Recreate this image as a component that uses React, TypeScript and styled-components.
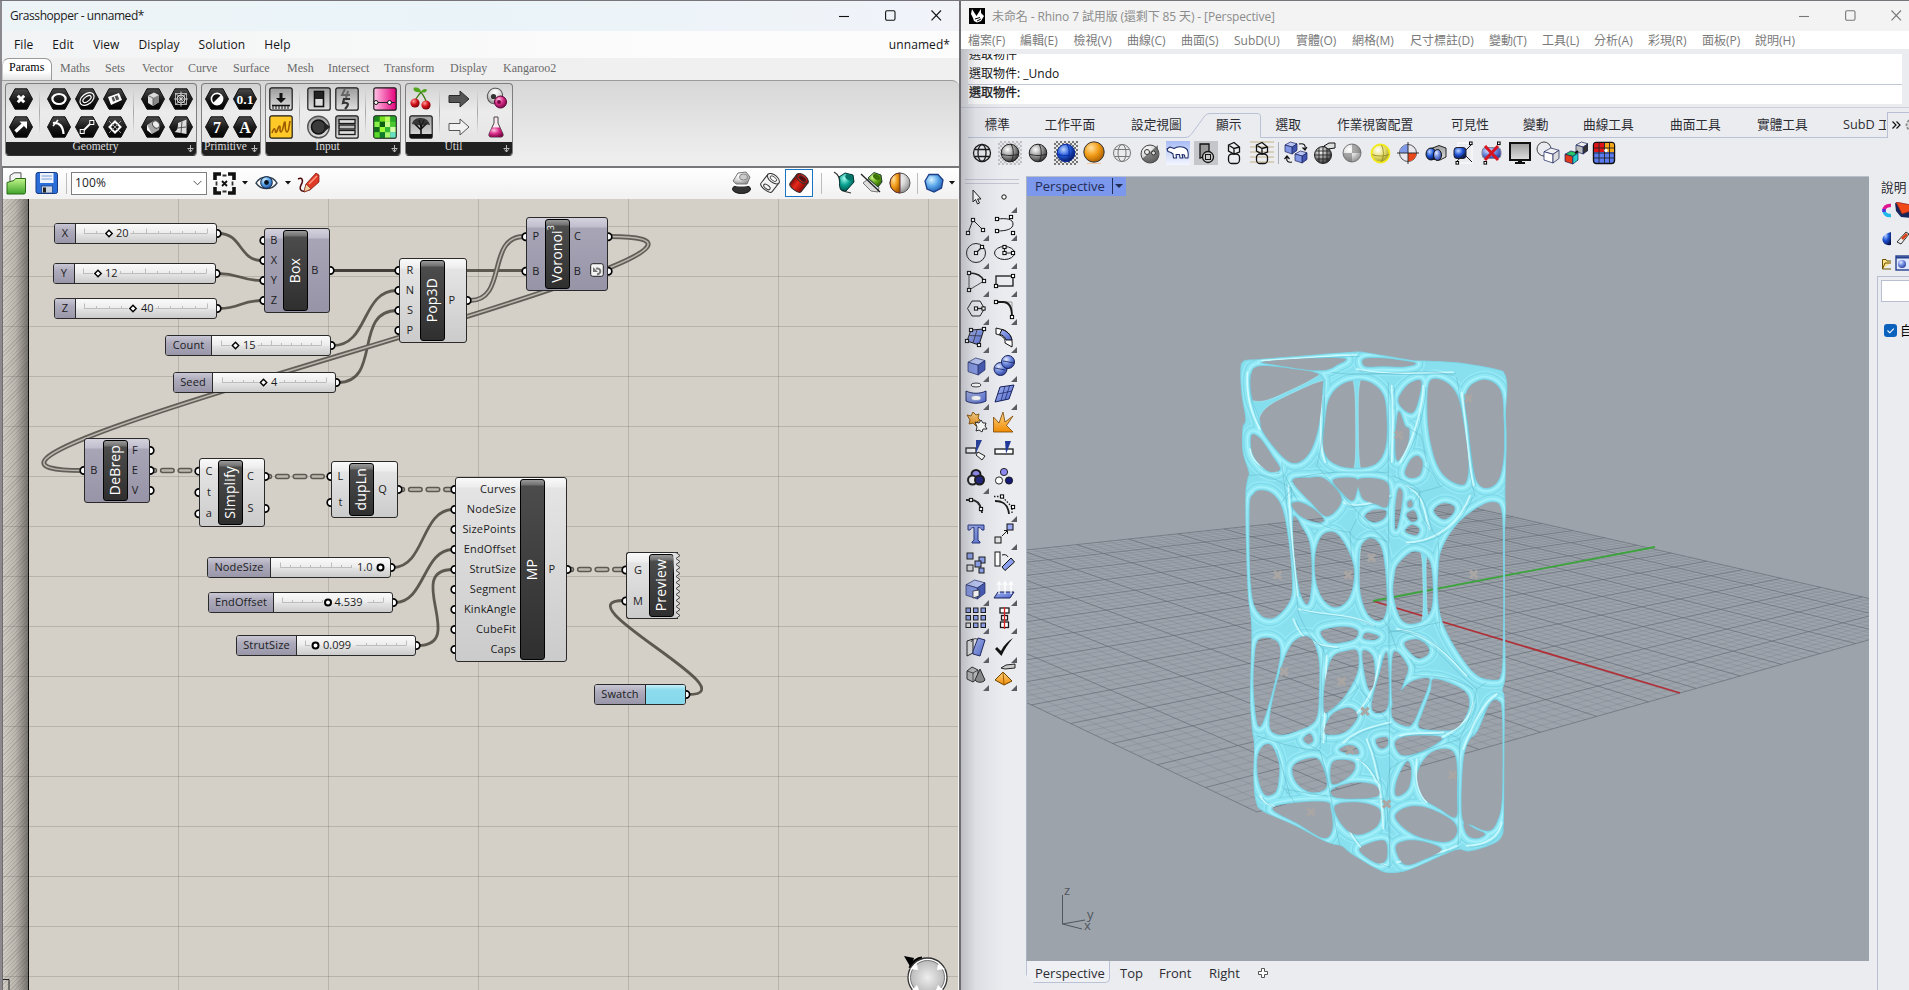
import React from "react";
import styled, { createGlobalStyle, css } from "styled-components";

const UI = '"Open Sans", "Noto Sans CJK TC", sans-serif';

const Global = createGlobalStyle`
  * { box-sizing: border-box; }
  html, body { margin: 0; padding: 0; overflow: hidden; }
  body { font-family: ${UI}; background: #ebecf0; }
  svg { display: block; flex: none; }
`;

const Desktop = styled.div`
  display: flex;
  width: 1909px;
  height: 990px;
  overflow: hidden;
  border-top: 1px solid #77757a;
`;

/* ---------- shared drawing definitions ---------- */

const HiddenSvg = styled.svg`
  position: absolute;
  width: 0;
  height: 0;
`;

const ball = (id: string, a: string, b: string, c: string) => (
  <radialGradient id={id} cx="0.36" cy="0.3" r="0.75">
    <stop offset="0" stopColor={a} />
    <stop offset="0.5" stopColor={b} />
    <stop offset="1" stopColor={c} />
  </radialGradient>
);

const Defs = () => (
  <HiddenSvg>
    <defs>
      {ball("gGray", "#ffffff", "#9a9a9a", "#2c2c2c")}
      {ball("gLight", "#ffffff", "#dcdcdc", "#8c8c8c")}
      {ball("gBlue", "#bcd6ff", "#1f55d8", "#04134f")}
      {ball("gSoft", "#e4eaff", "#6f8be0", "#2c3f98")}
      {ball("gOrange", "#ffe2a0", "#f29d18", "#a85c00")}
      {ball("gYellow", "#ffffff", "#e8e070", "#9c9420")}
      {ball("gRed", "#ff9a9a", "#d3121a", "#6c0006")}
      {ball("gPink", "#ffc4e2", "#d62b86", "#7a0544")}
      {ball("gSky", "#d8f2ff", "#5aa7ea", "#1c55a8")}
      {ball("gTeal", "#a4fff2", "#0aa392", "#004c44")}
      {ball("gGreen", "#dcff9c", "#6cb01c", "#2d5a00")}
      <linearGradient id="lHex" x1="0" y1="0" x2="0" y2="1">
        <stop offset="0" stopColor="#4a4a4a" />
        <stop offset="0.5" stopColor="#1b1b1b" />
        <stop offset="1" stopColor="#000" />
      </linearGradient>
      <linearGradient id="lGray" x1="0" y1="0" x2="0" y2="1">
        <stop offset="0" stopColor="#9c9c9c" />
        <stop offset="1" stopColor="#e0e0e0" />
      </linearGradient>
      <linearGradient id="lPink" x1="0" y1="0" x2="1" y2="0">
        <stop offset="0" stopColor="#ffc4e6" />
        <stop offset="1" stopColor="#e6007c" />
      </linearGradient>
      <linearGradient id="lRed" x1="0" y1="0" x2="1" y2="0">
        <stop offset="0" stopColor="#7c0a06" />
        <stop offset="0.4" stopColor="#e8281c" />
        <stop offset="1" stopColor="#8c0c08" />
      </linearGradient>
      <linearGradient id="lPale" x1="0" y1="0" x2="1" y2="1">
        <stop offset="0" stopColor="#a9b8f2" />
        <stop offset="1" stopColor="#4a63cc" />
      </linearGradient>
      <linearGradient id="lOrange" x1="0" y1="0" x2="0" y2="1">
        <stop offset="0" stopColor="#ffd489" />
        <stop offset="1" stopColor="#f08c00" />
      </linearGradient>
      <linearGradient id="lGreen" x1="0" y1="0" x2="0" y2="1">
        <stop offset="0" stopColor="#c2f58c" />
        <stop offset="1" stopColor="#3fa32a" />
      </linearGradient>
    </defs>
  </HiddenSvg>
);

/* ---------- window chrome ---------- */

const GhWindow = styled.section`
  width: 961px;
  height: 989px;
  display: flex;
  flex-direction: column;
  flex: none;
  background: #f0f0f0;
  border-left: 2px solid #8b898e;
  border-right: 2px solid #6f6d72;
`;

const TitleBar = styled.header<{ $muted?: boolean }>`
  height: 30px;
  flex: none;
  display: flex;
  align-items: center;
  font-size: 12px;
  letter-spacing: ${(p) => (p.$muted ? -0.12 : -0.42)}px;
  white-space: nowrap;
  color: ${(p) => (p.$muted ? "#8c8c8c" : "#1b1b1b")};
  background: ${(p) => (p.$muted ? "#f3f3f3" : "linear-gradient(90deg, #edf4f8, #eaf4f8 50%, #f1f3f9)")};
  padding: 0 0 1px 8px;
`;

const TitleText = styled.span`
  flex: 1;
`;

const Controls = styled.div<{ $right: number }>`
  display: flex;
  gap: 35px;
  margin-right: ${(p) => p.$right}px;
`;

const WindowControls = ({ color, right }: { color: string; right: number }) => (
  <Controls $right={right}>
    <svg width="11" height="11"><path d="M0 6.5H10" stroke={color} strokeWidth="1.1" /></svg>
    <svg width="11" height="11"><rect x="0.6" y="0.8" width="9.4" height="9.4" rx="1.4" fill="none" stroke={color} strokeWidth="1.1" /></svg>
    <svg width="11" height="11"><path d="M0.5 0.5L10 10.3M10 0.5L0.5 10.3" stroke={color} strokeWidth="1.1" /></svg>
  </Controls>
);

const GhMenu = styled.nav`
  height: 27px;
  flex: none;
  display: flex;
  align-items: center;
  gap: 19px;
  padding: 0 9px 0 12px;
  font-size: 12px;
  letter-spacing: 0.08px;
  color: #141414;
  background: linear-gradient(90deg, #f2f3f4, #fcfcfc 70%);
`;

const Push = styled.span`
  margin-left: auto;
`;

const TabRow = styled.div`
  height: 22px;
  flex: none;
  display: flex;
  background: #f0f0f0;
`;

const GhTab = styled.div<{ $w: number; $active?: boolean }>`
  width: ${(p) => p.$w}px;
  height: 22px;
  font: 12px/21px "Liberation Serif", serif;
  color: #6a6a6a;
  ${(p) =>
    p.$active &&
    css`
      color: #000;
      margin-right: 8px;
      padding: 0 0 0 6px;
      line-height: 16px;
      background: linear-gradient(#fff 60%, #e4e4e4);
      border: 1px solid #9a9a9a;
      border-left-color: #c8c8c8;
      border-bottom: 0;
      border-radius: 7px 7px 0 0;
    `}
`;

const Ribbon = styled.div`
  height: 86px;
  flex: none;
  display: flex;
  align-items: flex-start;
  gap: 4px;
  padding: 2px 0 0 2.5px;
  border-top: 1px solid #9c9c9c;
  border-radius: 0 7px 0 0;
  background: linear-gradient(#d7d7d7, #eeeeee 90%);
`;

const Group = styled.div`
  height: 73px;
  display: flex;
  flex-direction: column;
  border: 1px solid #7e7e7e;
  border-bottom-color: #333;
  border-radius: 4px;
  overflow: hidden;
  background: linear-gradient(#d2d2d2, #ececec 40%, #e2e2e2);
`;

const GroupCells = styled.div`
  display: flex;
  padding: 1px 1px 0;
  height: 58px;
`;

const CellColumn = styled.div<{ $split?: boolean }>`
  width: ${(p) => (p.$split ? 38 : 28)}px;
  padding-left: ${(p) => (p.$split ? 10 : 0)}px;
  display: flex;
  flex-direction: column;
  background: ${(p) => (p.$split ? "linear-gradient(transparent, #a8a8a8 50%, transparent) 4px 4px / 1px 46px no-repeat" : "none")};
`;

const Cell = styled.div`
  width: 28px;
  height: 28px;
  display: grid;
  place-items: center;
`;

const GroupName = styled.div`
  flex: 1;
  display: flex;
  justify-content: center;
  padding-right: 10px;
  position: relative;
  background: #202020;
  color: #dcdcdc;
  font: 11.5px/8px "Liberation Serif", serif;
`;

const GroupMore = styled.svg`
  position: absolute;
  right: 2px;
  top: 3px;
`;

const Hex = ({ children }: { children: React.ReactNode }) => (
  <svg width="24" height="22" viewBox="0 0 24 22">
    <path d="M6 0.8H18L23.5 11L18 21.2H6L0.5 11Z" fill="url(#lHex)" stroke="#111" />
    {children}
  </svg>
);

const Tile = ({ fill = "url(#lGray)", children }: { fill?: string; children: React.ReactNode }) => (
  <svg width="24" height="24" viewBox="0 0 24 24">
    <rect x="0.8" y="0.8" width="22.4" height="22.4" rx="2" fill={fill} stroke="#1a1a1a" strokeWidth="1.2" />
    {children}
  </svg>
);

const w = { fill: "none", stroke: "#fff", strokeWidth: 1.5 } as const;
const k = { fill: "none", stroke: "#1a1a1a", strokeWidth: 1.3 } as const;
const glyph = { fontFamily: "Liberation Serif, serif", fontWeight: 700, fill: "#fff", textAnchor: "middle" } as const;

type Column = { split?: boolean; icons: [React.ReactNode, React.ReactNode] };

const greens = ["#1b8a1b", "#7be01e", "#b9ff5e", "#2aa82a", "#8cf04a", "#0d5f12", "#c8ff8a", "#4cc832", "#136b1c", "#9dff3a", "#35b535", "#d6ffb0", "#5dd92a", "#0f7a2c", "#a8f570", "#68e0c8"];

const ribbonGroups: { name: string; columns: Column[] }[] = [
  {
    name: "Geometry",
    columns: [
      { icons: [
        <Hex><path d="M8.8 7.8L15.2 14.2M15.2 7.8L8.8 14.2" stroke="#fff" strokeWidth="3" /></Hex>,
        <Hex><path d="M6.5 15.5L14 8.5" stroke="#fff" strokeWidth="3.4" /><path d="M10.5 5.5H18V13Z" fill="#fff" /></Hex>,
      ] },
      { split: true, icons: [
        <Hex><ellipse cx="12" cy="11" rx="6.6" ry="5" {...w} strokeWidth={2.2} /></Hex>,
        <Hex><path d="M6 7C12 6 16 10 16.5 18" {...w} strokeWidth={2.2} /><path d="M6 10L11 4" {...w} /></Hex>,
      ] },
      { icons: [
        <Hex><g transform="rotate(-38 12 11)"><ellipse cx="12" cy="11" rx="8" ry="5.2" {...w} strokeWidth={1.2} /><ellipse cx="12" cy="11" rx="4.8" ry="2.4" {...w} strokeWidth={1.2} /></g></Hex>,
        <Hex><path d="M7 16L17 6" {...w} strokeWidth={1.8} /><rect x="5.2" y="13.5" width="4" height="4" fill="#222" stroke="#fff" /><rect x="14.8" y="4.5" width="4" height="4" fill="#222" stroke="#fff" /></Hex>,
      ] },
      { icons: [
        <Hex><path d="M5 9L16 5L19 12L8 17Z" fill="#fff" /><path d="M8.5 9.5L14.5 7.3L16.3 11.3L10 13.8Z" fill="#555" /><path d="M11 8L13 13" stroke="#fff" /></Hex>,
        <Hex><path d="M12 5.5L17.5 11L12 16.5L6.5 11Z" {...w} strokeWidth={2} /><path d="M6 5L18 17M18 5L6 17" stroke="#aaa" strokeWidth="0.9" /></Hex>,
      ] },
      { split: true, icons: [
        <Hex><path d="M7 7.5L13 4.5L18 7V14L12 18L7 15Z" fill="#ddd" /><path d="M12 10L18 7V14L12 18Z" fill="#888" /><path d="M7 7.5L12 10V18" stroke="#555" fill="none" strokeWidth="0.8" /></Hex>,
        <Hex><path d="M6 9L14 4L19 9L18 14L11 18L6 14Z" fill="#a8a8a8" /><path d="M6 9L11 18L6 14Z" fill="#fff" /><ellipse cx="15" cy="8.500" rx="3.200" ry="3.900" fill="#eee" stroke="#555" transform="rotate(-35 15 8.500)" /></Hex>,
      ] },
      { icons: [
        <Hex><path d="M12 3.5V18.5M5 11H19M7 5.5L17 16.5M17 5.5L7 16.5" stroke="#ddd" strokeWidth="0.9" /><circle cx="12" cy="11" r="4" stroke="#ddd" fill="none" /><rect x="6.5" y="5.5" width="11" height="11" fill="none" stroke="#ccc" strokeWidth="0.8" /></Hex>,
        <Hex><path d="M9 7L17.500 3.500V18L12 17L5.500 16C9 14 9 11 9 7Z" fill="#ddd" /><path d="M13 5.500L12 17M8.500 12L17 11" stroke="#444" strokeWidth="0.9" fill="none" /></Hex>,
      ] },
    ],
  },
  {
    name: "Primitive",
    columns: [
      { icons: [
        <Hex><circle cx="12" cy="11" r="5.6" fill="#111" stroke="#fff" strokeWidth="1.6" /><path d="M8 15A5.6 5.6 0 0 0 16 7Z" fill="#fff" /></Hex>,
        <Hex><text x="12" y="16.5" fontSize="16" {...glyph}>7</text></Hex>,
      ] },
      { icons: [
        <Hex><text x="12" y="15.8" fontSize="13.5" {...glyph}>0.1</text></Hex>,
        <Hex><text x="12" y="16.5" fontSize="16" {...glyph}>A</text></Hex>,
      ] },
    ],
  },
  {
    name: "Input",
    columns: [
      { icons: [
        <Tile><path d="M10.5 6H13.5V11H17L12 16L7 11H10.5Z" fill="#111" /><path d="M3 18.500H21" stroke="#111" strokeWidth="1.600" /><path d="M4 19V22M7 19V22M10 19V22M13 19V22M16 19V22M19 19V22" stroke="#111" /></Tile>,
        <Tile fill="#ffc928"><path d="M3 18C5 12 6 13 6.500 17C8 19 9 11 10.500 11C12 11 10 17 12 17C14 17 15 6 16 7C17 8 15 16 18 17C20 17 20 10 21 6" fill="none" stroke="#9c5c00" strokeWidth="1.6" /></Tile>,
      ] },
      { split: true, icons: [
        <Tile><rect x="7.500" y="4.500" width="9" height="15" fill="#ddd" stroke="#111" strokeWidth="1.6" /><rect x="8" y="5" width="8" height="7" fill="#222" /></Tile>,
        <svg width="24" height="24" viewBox="0 0 24 24"><circle cx="11.5" cy="12" r="10.8" fill="url(#lGray)" stroke="#555" strokeWidth="1.4" /><circle cx="11.500" cy="12" r="7" fill="#3a3a3a" stroke="#111" strokeWidth="1.600" /><path d="M17 7L23 12L17 17Z" fill="#222" /></svg>,
      ] },
      { icons: [
        <Tile><path d="M10 2L7 8H15M13 4L11 11" stroke="#666" strokeWidth="2" fill="none" /><path d="M15 12H9L8 16C13 15 15 17 10 22" stroke="#333" strokeWidth="2.2" fill="none" /></Tile>,
        <Tile><rect x="4" y="4.500" width="16" height="4" {...k} fill="#ddd" /><rect x="4" y="10" width="16" height="4" {...k} fill="#bbb" /><rect x="4" y="15.500" width="16" height="4" {...k} fill="#ddd" /></Tile>,
      ] },
      { split: true, icons: [
        <Tile fill="url(#lPink)"><path d="M2 15.500H22" stroke="#222" strokeWidth="1.2" /><circle cx="3" cy="15.500" r="2" fill="#fff" stroke="#111" /><circle cx="16.500" cy="15.500" r="2" fill="#fff" stroke="#111" /></Tile>,
        <Tile fill="#2aa82a">{greens.map((c, i) => <rect key={i} x={1.5 + (i % 4) * 5.25} y={1.5 + Math.floor(i / 4) * 5.25} width="5.3" height="5.3" fill={c} />)}</Tile>,
      ] },
    ],
  },
  {
    name: "Util",
    columns: [
      { icons: [
        <svg width="24" height="24" viewBox="0 0 24 24"><path d="M12 5C9 9 7 11 6 14M12 5C15 10 17 12 17 15" stroke="#3c7a10" strokeWidth="1.300" fill="none" /><path d="M12 5C4 6 4 2 5 0.500C9 0 12 2 12 5C13 2 17 1 18 3C17 6 14 6 12 5Z" fill="#4fa51c" /><circle cx="6" cy="16" r="4.600" fill="url(#gRed)" /><circle cx="17" cy="18" r="4.600" fill="url(#gRed)" /></svg>,
        <Tile><path d="M12 22V12M12 15L6 9M12 14L18 8M12 12L10 5M12 12L15 5" stroke="#111" strokeWidth="1.600" fill="none" /><path d="M3 9C4 4 8 3 12 3C17 3 20 6 21 10C17 8 16 12 12 9C9 12 6 9 3 9Z" fill="#222" opacity="0.85" /><path d="M1 19H23V23H1Z" fill="#111" /></Tile>,
      ] },
      { split: true, icons: [
        <svg width="22" height="20" viewBox="0 0 22 20"><path d="M1 6.500H12V2L21 10L12 18V13.500H1Z" fill="#555" stroke="#2a2a2a" /></svg>,
        <svg width="22" height="20" viewBox="0 0 22 20"><path d="M1 6.500H12V2L21 10L12 18V13.500H1Z" fill="#f2f2f2" stroke="#555" /></svg>,
      ] },
      { split: true, icons: [
        <svg width="24" height="24" viewBox="0 0 24 24"><ellipse cx="10" cy="9" rx="7.5" ry="8" fill="url(#gLight)" stroke="#555" transform="rotate(35 10 9)" /><circle cx="8.500" cy="9.500" r="2.600" fill="#333" /><circle cx="15.500" cy="15" r="6" fill="url(#gPink)" stroke="#5a0030" /><circle cx="14" cy="15" r="2" fill="#7a0544" /></svg>,
        <svg width="22" height="24" viewBox="0 0 22 24"><path d="M8 2H12V8L17 19C17.500 21 16.500 22 15 22H5C3.500 22 2.500 21 3 19L8 8Z" fill="#fbe9f2" stroke="#444" /><path d="M6 12.500H14L17 19C17.500 21 16.500 22 15 22H5C3.500 22 2.500 21 3 19Z" fill="url(#gPink)" /></svg>,
      ] },
    ],
  },
];

const ghTabs: [string, number][] = [
  ["Maths", 45], ["Sets", 37], ["Vector", 46], ["Curve", 45], ["Surface", 54], ["Mesh", 41],
  ["Intersect", 56], ["Transform", 66], ["Display", 53], ["Kangaroo2", 60],
];

/* ---------- canvas toolbar ---------- */

const CanvasBar = styled.div`
  height: 33px;
  flex: none;
  display: flex;
  align-items: center;
  border-top: 2px solid #77777a;
  border-left: 1px solid #77777a;
  padding: 0 4px 1px 3px;
  background: linear-gradient(#ffffff, #f1f1f1);
`;

const Gap = styled.span<{ $w: number }>`
  width: ${(p) => p.$w}px;
  flex: none;
`;

const Divider = styled.span`
  width: 1px;
  height: 21px;
  background: #bdbdbd;
  flex: none;
`;

const Zoom = styled.div`
  width: 136px;
  height: 23px;
  border: 1px solid #7f7f7f;
  background: #fff;
  display: flex;
  align-items: center;
  justify-content: space-between;
  padding: 0 4px 1px 3px;
  font-size: 12px;
  letter-spacing: 0.1px;
  color: #222;
`;

const Selected = styled.span`
  width: 28px;
  height: 28px;
  display: grid;
  place-items: center;
  border: 1px solid #1a74c4;
  background: #fff;
`;

const Caret = () => <svg width="6" height="4"><path d="M0 0H6L3 3.500Z" fill="#111" /></svg>;

const Tube = ({ fill, open }: { fill: string; open?: boolean }) => (
  <svg width="24" height="24" viewBox="0 0 24 24">
    <g transform="rotate(38 12 12)" stroke="#333" strokeWidth="1">
      <path d="M5 6.500V17.500C5 21.500 19 21.500 19 17.500V6.500Z" fill={fill} />
      <ellipse cx="12" cy="6.500" rx="7" ry="3.800" fill={fill} />
      <ellipse cx="12" cy="6.500" rx="3.800" ry="1.900" fill={open ? "#fff" : "#5a0804"} strokeWidth="0.800" />
      {open && <ellipse cx="12" cy="17" rx="3.800" ry="1.900" fill="none" />}
    </g>
  </svg>
);

const GhToolbar = () => (
  <CanvasBar>
    <svg width="21" height="23" viewBox="0 0 21 23"><path d="M4 10V3.500L8 0.800H15V10" fill="#f4f4f4" stroke="#555" /><path d="M1 10.500L8 8.500L9.500 6.500H19.500V20.500L18.500 22H1Z" fill="url(#lGreen)" stroke="#2b6b18" /></svg>
    <Gap $w={8} />
    <svg width="24" height="24" viewBox="0 0 24 24"><rect x="1" y="1.500" width="21.500" height="21" rx="2" fill="#2a6cd8" stroke="#163a80" /><rect x="5" y="2" width="13.500" height="10" fill="#eef3fb" /><path d="M6.500 5H17M6.500 8H17" stroke="#7aa0d8" /><rect x="6.500" y="15" width="11" height="7" fill="#c9d2e0" stroke="#163a80" strokeWidth="0.700" /><rect x="8" y="16.500" width="3" height="5" fill="#222" /></svg>
    <Gap $w={7} /><Divider /><Gap $w={4} />
    <Zoom>100%<svg width="9" height="6"><path d="M0.500 0.800L4.500 4.800L8.500 0.800" fill="none" stroke="#555" /></svg></Zoom>
    <Gap $w={6} />
    <svg width="23" height="23" viewBox="0 0 23 23"><path d="M8 2H2V8M15 2H21V8M8 21H2V15M15 21H21V15" fill="none" stroke="#111" strokeWidth="3.600" /><path d="M9.500 3.500H13.500M9.500 19.500H13.500M3.500 9.500V13.500M19.500 9.500V13.500" stroke="#333" strokeWidth="1.800" /><path d="M9 9L14 14M14 9L9 14" stroke="#111" strokeWidth="1.800" /></svg>
    <Gap $w={6} /><Caret /><Gap $w={7} />
    <svg width="23" height="16" viewBox="0 0 23 16"><path d="M1 8C6 0 17 0 22 8C17 15.500 6 15.500 1 8Z" fill="#fff" stroke="#345" strokeWidth="1.400" /><circle cx="11.500" cy="7.500" r="5.800" fill="url(#gSky)" stroke="#124" /><circle cx="11.500" cy="7.500" r="2.400" fill="#06121f" /></svg>
    <Gap $w={7} /><Caret /><Gap $w={6} />
    <svg width="24" height="22" viewBox="0 0 24 22"><path d="M1 7C5 5 7 8 4 13C2 17 4 20 8 19" fill="none" stroke="#4a0a0a" strokeWidth="1.500" /><path d="M7 20L9 12L19 1L22 3V10L13 18Z" fill="#e03a26" stroke="#701008" strokeWidth="0.700" /><path d="M7 20L9 12L14 17Z" fill="#f2d2a0" stroke="#701008" strokeWidth="0.500" /><path d="M12 12L20 4" stroke="#ff9b80" strokeWidth="1.500" /></svg>
    <Push />
    <svg width="24" height="24" viewBox="0 0 24 24"><ellipse cx="12.500" cy="18" rx="9" ry="4.500" fill="#333" stroke="#111" /><path d="M4 14C8 10 17 10 21 14C17 16 8 16 4 14Z" fill="#fff" /><path d="M4 10L9 2L17 1L21 6L18 13L7 13Z" fill="url(#gLight)" stroke="#777" /><ellipse cx="14.500" cy="6" rx="4" ry="3" fill="#ccc" stroke="#888" /></svg>
    <Gap $w={5} /><Tube fill="#f4f4f4" open /><Gap $w={3} />
    <Selected><Tube fill="url(#lRed)" /></Selected>
    <Gap $w={8} /><Divider /><Gap $w={11} />
    <svg width="24" height="24" viewBox="0 0 24 24"><path d="M1 1C10 6 4 14 10 20L18 22" fill="none" stroke="#333" strokeWidth="1.200" /><path d="M6 6L12 2L20 4L21 11L13 20L8 19C5 14 8 11 6 6Z" fill="url(#gTeal)" stroke="#033" /><ellipse cx="16" cy="6.500" rx="4" ry="2.500" fill="#067468" transform="rotate(30 16 6.500)" /></svg>
    <Gap $w={3} />
    <svg width="24" height="24" viewBox="0 0 24 24"><path d="M3 12L11 20L18 21L19 16L8 8Z" fill="#ddd" stroke="#777" /><path d="M8 7L14 1.500L21 4L22 11L18 16Z" fill="url(#gGreen)" stroke="#243" /><ellipse cx="16.500" cy="6" rx="4" ry="2.500" fill="#3d7408" transform="rotate(35 16.500 6)" /><path d="M1 3L20 21" stroke="#222" strokeWidth="1.300" /></svg>
    <Gap $w={4} />
    <svg width="24" height="24" viewBox="0 0 24 24"><circle cx="12" cy="12" r="10" fill="url(#gLight)" stroke="#555" /><path d="M12 2A10 10 0 0 0 12 22Z" fill="url(#gOrange)" stroke="#633" /></svg>
    <Gap $w={5} /><Divider /><Gap $w={6} />
    <svg width="20" height="20" viewBox="0 0 20 20"><path d="M5 1.500H14L19 7L17.500 15L10 19L3 16L1 8Z" fill="url(#gSky)" stroke="#1b3d88" strokeWidth="1.300" /></svg>
    <Gap $w={5} /><Caret />
  </CanvasBar>
);

/* ---------- node canvas ---------- */

const CanvasArea = styled.div`
  position: relative;
  flex: 1;
  overflow: hidden;
  border-left: 1px solid #6f6d70;
  border-right: 1px solid #f4f4f4;
  background:
    repeating-linear-gradient(90deg, transparent 0 149px, rgba(70, 66, 58, 0.2) 149px 150px) 26px 0,
    repeating-linear-gradient(180deg, transparent 0 49px, rgba(70, 66, 58, 0.2) 49px 50px) 0 -22px / 100% 1000px,
    #d4d0c8;
`;

const CanvasEdge = styled.div`
  position: absolute;
  left: 0;
  top: 0;
  bottom: 0;
  width: 26px;
  border-right: 1px solid #111;
  background:
    linear-gradient(90deg, rgba(70, 66, 60, 0.02), rgba(70, 66, 60, 0.18) 50%, rgba(60, 58, 54, 0.62)),
    repeating-linear-gradient(135deg, rgba(120, 116, 108, 0.25) 0 1px, transparent 1px 3px);
`;

/* Canvas children use window coordinates; this layer shifts them back. */
const Layer = styled.div`
  position: absolute;
  left: -3px;
  top: -199px;
  width: 960px;
  height: 990px;
`;

const WireSvg = styled.svg`
  position: absolute;
  inset: 0;
`;

const violet = "linear-gradient(#d4d2dc 0, #c0bece 9px, #a7a5b6 10px, #9694a6 100%)";
const silver = "linear-gradient(#fafafa 0, #ededed 9px, #e4e4e4 10px, #cbcbcb 100%)";

const NodeBox = styled.div<{ $x: number; $y: number; $w: number; $h: number; $violet?: boolean; $open?: boolean }>`
  position: absolute;
  left: ${(p) => p.$x}px;
  top: ${(p) => p.$y}px;
  width: ${(p) => p.$w}px;
  height: ${(p) => p.$h}px;
  display: flex;
  border: 1px solid #2a2a2a;
  border-radius: 3px;
  background: ${(p) => (p.$violet ? violet : silver)};
  ${(p) => p.$open && css`border-right: 0; border-radius: 3px 0 0 3px;`}
`;

const PortColumn = styled.div<{ $w?: number }>`
  ${(p) => (p.$w ? `width: ${p.$w}px;` : "flex: 1;")}
  display: flex;
  flex-direction: column;
  padding: 1.5px 0;
`;

const PortName = styled.span<{ $pad?: number }>`
  flex: 1;
  display: flex;
  align-items: center;
  justify-content: ${(p) => (p.$pad !== undefined ? "flex-end" : "center")};
  padding: 0 ${(p) => p.$pad || 0}px 2px 0;
  font-size: 11px;
  letter-spacing: 0.15px;
  line-height: 1;
  color: #1c1c22;
`;

const NodeTitle = styled.div`
  width: 25px;
  margin: 1px 0;
  display: grid;
  place-items: center;
  border: 1px solid #000;
  border-radius: 3px;
  background: linear-gradient(#9a9a9a 0, #707070 5px, #4c4c4c 6px, #2f2f2f 100%);
  color: #fff;
  font-size: 14px;
  line-height: 23px;
  white-space: nowrap;
`;

const Vertical = styled.span`
  writing-mode: vertical-rl;
  transform: translateX(-1.5px) rotate(180deg);
  letter-spacing: 0.15px;
  sup { font-size: 9px; line-height: 0; }
`;

type NodeData = {
  id: string; x: number; y: number; w: number; h: number; violet?: boolean; open?: boolean;
  leftW: number; title: React.ReactNode; ins: string[]; outs: string[]; end?: boolean; undo?: boolean; rightW?: number;
};

const nodes: NodeData[] = [
  { id: "box", x: 264, y: 228, w: 66, h: 85, violet: true, leftW: 18, title: "Box", ins: ["B", "X", "Y", "Z"], outs: ["B"], rightW: 14 },
  { id: "pop", x: 399, y: 258, w: 68, h: 85, leftW: 20, title: "Pop3D", ins: ["R", "N", "S", "P"], outs: ["P"], rightW: 14 },
  { id: "vor", x: 526, y: 217, w: 82, h: 74, violet: true, leftW: 18, title: <>Voronoi<sup>3</sup></>, ins: ["P", "B"], outs: ["C", "B"], undo: true, rightW: 15 },
  { id: "brep", x: 84, y: 438, w: 66, h: 65, violet: true, leftW: 18, title: "DeBrep", ins: ["B"], outs: ["F", "E", "V"], rightW: 14 },
  { id: "simp", x: 199, y: 458, w: 66, h: 69, leftW: 18, title: "Simplify", ins: ["C", "t", "a"], outs: ["C", "S"], rightW: 15 },
  { id: "dup", x: 331, y: 461, w: 67, h: 57, leftW: 17, title: "dupLn", ins: ["L", "t"], outs: ["Q"], rightW: 17 },
  { id: "mp", x: 455, y: 477, w: 112, h: 185, leftW: 64, title: "MP", ins: ["Curves", "NodeSize", "SizePoints", "EndOffset", "StrutSize", "Segment", "KinkAngle", "CubeFit", "Caps"], outs: ["P"], end: true, rightW: 14 },
  { id: "prev", x: 626, y: 552, w: 52, h: 67, open: true, leftW: 22, title: "Preview", ins: ["G", "M"], outs: [] },
];

const UndoBadge = styled.span`
  position: absolute;
  right: 3px;
  bottom: 13px;
`;

const Teeth = styled.svg`
  position: absolute;
  right: -3px;
  top: -1px;
`;

const GraphNode = ({ n }: { n: NodeData }) => (
  <NodeBox $x={n.x} $y={n.y} $w={n.w} $h={n.h} $violet={n.violet} $open={n.open}>
    <PortColumn $w={n.leftW}>
      {n.ins.map((p) => <PortName key={p} $pad={n.end ? 4 : undefined}>{p}</PortName>)}
    </PortColumn>
    <NodeTitle><Vertical>{n.title}</Vertical></NodeTitle>
    <PortColumn $w={n.rightW}>
      {n.outs.map((p) => <PortName key={p}>{p}</PortName>)}
    </PortColumn>
    {n.undo && (
      <UndoBadge>
        <svg width="14" height="14"><rect x="0.700" y="0.700" width="12.600" height="12.600" rx="2" fill="#f4f4f4" stroke="#222" /><path d="M7 11.500C12 10 11 4.500 6 5.500" stroke="#777" strokeWidth="2" fill="none" /><path d="M3 4V9H8Z" fill="#777" /></svg>
      </UndoBadge>
    )}
    {n.open && (
      <Teeth width="8" height="67">
        <path d={"M0 0.500H3" + Array.from({ length: 11 }, (_, i) => `L7 ${3.5 + i * 6}L3 ${6.5 + i * 6}`).join("")} fill="#e2e2e2" stroke="#333" strokeWidth="0.900" />
      </Teeth>
    )}
  </NodeBox>
);

const SliderName = styled.div<{ $w: number }>`
  width: ${(p) => p.$w}px;
  display: flex;
  align-items: center;
  justify-content: center;
  padding-bottom: 2px;
  border-right: 1px solid #2a2a2a;
  border-radius: 2px 0 0 2px;
  background: linear-gradient(#c9c7d4 0, #adabbb 7px, #9896a8 100%);
  font-size: 11px;
  letter-spacing: 0.15px;
  line-height: 1;
  color: #1c1c22;
`;

const SliderBody = styled.div<{ $color?: string }>`
  flex: 1;
  position: relative;
  border-radius: 0 2px 2px 0;
  background: ${(p) => p.$color || "transparent"};
`;

const Ruler = styled.svg`
  position: absolute;
  left: 0;
  top: 0;
`;

const SliderValue = styled.span<{ $x: number }>`
  position: absolute;
  left: ${(p) => p.$x}px;
  top: 2px;
  font-size: 11px;
  line-height: 14px;
  color: #1c1c1c;
`;

type SliderData = { x: number; y: number; w: number; name: string; lw: number; t0: number; t1: number; knob: number; value: string; vx: number; round?: boolean };

const sliders: SliderData[] = [
  { x: 54, y: 223, w: 163, name: "X", lw: 21, t0: 84, t1: 207, knob: 109, value: "20", vx: 116 },
  { x: 53, y: 263, w: 163, name: "Y", lw: 21, t0: 83, t1: 206, knob: 98, value: "12", vx: 105 },
  { x: 54, y: 298, w: 163, name: "Z", lw: 21, t0: 84, t1: 207, knob: 133, value: "40", vx: 141 },
  { x: 165, y: 335, w: 166, name: "Count", lw: 46, t0: 221, t1: 321, knob: 235.5, value: "15", vx: 243 },
  { x: 173, y: 372, w: 163, name: "Seed", lw: 39, t0: 222, t1: 326, knob: 263.5, value: "4", vx: 271 },
  { x: 207, y: 557, w: 184, name: "NodeSize", lw: 63, t0: 280, t1: 381, knob: 380, value: "1.0", vx: 357, round: true },
  { x: 208, y: 592, w: 185, name: "EndOffset", lw: 65, t0: 282, t1: 383, knob: 327.5, value: "4.539", vx: 334.5, round: true },
  { x: 236, y: 635, w: 180, name: "StrutSize", lw: 60, t0: 305, t1: 406, knob: 315, value: "0.099", vx: 323, round: true },
];

const SliderNode = ({ s }: { s: SliderData }) => {
  const o = s.x + s.lw + 1;
  const lo = Math.min(s.knob, s.vx) - 5;
  const hi = Math.max(s.knob, s.vx + s.value.length * 6.2) + 2;
  const ticks = Array.from({ length: 11 }, (_, i) => s.t0 + ((s.t1 - s.t0) * i) / 10).filter((t) => t < lo || t > hi);
  return (
    <NodeBox $x={s.x} $y={s.y} $w={s.w} $h={21}>
      <SliderName $w={s.lw}>{s.name}</SliderName>
      <SliderBody>
        <Ruler width={s.w - s.lw - 2} height="19">
          <g stroke="#bdbdbd" strokeWidth="1">
            {lo > s.t0 && <path d={`M${s.t0 - o} 9.500H${lo - o}`} />}
            {hi < s.t1 && <path d={`M${hi - o} 9.500H${s.t1 - o}`} />}
            {ticks.map((t, i) => <path key={i} d={`M${Math.round(t - o) + 0.5} ${t === s.t0 || t === s.t1 || Math.abs(t - (s.t0 + s.t1) / 2) < 1 ? 4.5 : 7}V9.500`} />)}
          </g>
          {s.round ? (
            <circle cx={s.knob - o + 0.5} cy="9.500" r="3" fill="#fff" stroke="#000" strokeWidth="2" />
          ) : (
            <path d={`M${s.knob - o} 6.300L${s.knob - o + 3.2} 9.500L${s.knob - o} 12.700L${s.knob - o - 3.2} 9.500Z`} fill="#fff" stroke="#000" strokeWidth="1.400" />
          )}
        </Ruler>
        <SliderValue $x={s.vx - o}>{s.value}</SliderValue>
      </SliderBody>
    </NodeBox>
  );
};

const bez = (x1: number, y1: number, x2: number, y2: number, d: number) => `M${x1} ${y1}C${x1 + d} ${y1} ${x2 - d} ${y2} ${x2} ${y2}`;
const wire = "rgba(62,58,50,0.8)";

const plainWires = [
  bez(219, 233.5, 262, 260.5, 23), bez(218, 273.5, 262, 280.5, 22), bez(219, 308.5, 262, 300.5, 22),
  bez(333, 345.5, 397, 290.5, 36), bez(338, 382.5, 397, 310.5, 44),
  bez(393, 567.5, 453, 509.5, 32), bez(395, 602.5, 453, 549.5, 30), bez(418, 645.5, 453, 569.5, 50),
  bez(688, 694.5, 624, 600.5, 66), "M332 270.500H397", "M332 270.500H524",
];
const doubleWires = [bez(470, 300.5, 524, 236.5, 38), bez(610, 236.5, 82, 470.5, 244)];
const treeWires: [number, number, number][] = [[152, 197, 470.5], [267, 329, 476.5], [400, 453, 489.5], [569, 624, 569.5]];

const portY = (n: NodeData, i: number, c: number) => n.y + 2.5 + ((i + 0.5) * (n.h - 5)) / c;

const Wires = () => (
  <WireSvg width="960" height="990">
    <g fill="none">
      {plainWires.map((d, i) => <path key={i} d={d} stroke={wire} strokeWidth="2.800" />)}
      {doubleWires.map((d, i) => (
        <g key={i}><path d={d} stroke="#625f58" strokeWidth="5" /><path d={d} stroke="#bcb8b0" strokeWidth="1.500" /></g>
      ))}
      {treeWires.map(([a, b, y], i) => (
        <g key={i}>
          {Array.from({ length: Math.ceil((b - a + 9) / 17.6) }, (_, j) => {
            const s = Math.max(a, a - 9 + j * 17.6);
            const e = Math.min(b, a + 4.5 + j * 17.6);
            return e > s ? <rect key={j} x={s} y={y - 2} width={e - s} height="4" rx="2" fill="#bcb8b0" stroke="#5c5952" strokeWidth="1.500" /> : null;
          })}
        </g>
      ))}
    </g>
    <g fill="#fff" stroke="#000" strokeWidth="1.700">
      {nodes.map((n) => (
        <g key={n.id}>
          {n.ins.map((_, i) => <circle key={"i" + i} cx={n.x - 0.2} cy={portY(n, i, n.ins.length)} r="3.600" />)}
          {n.outs.map((_, i) => <circle key={"o" + i} cx={n.x + n.w + 0.2} cy={portY(n, i, n.outs.length)} r="3.600" />)}
        </g>
      ))}
      {sliders.map((s) => <circle key={s.name} cx={s.x + s.w + 0.2} cy={s.y + 10.5} r="3.600" />)}
      <circle cx="686" cy="694.500" r="3.600" />
    </g>
  </WireSvg>
);

const Compass = styled.svg`
  position: absolute;
  left: 900px;
  top: 950px;
`;

const CornerMark = styled.svg`
  position: absolute;
  left: 3px;
  top: 978px;
`;

const Grasshopper = () => (
  <GhWindow>
    <TitleBar><TitleText>Grasshopper - unnamed*</TitleText><WindowControls color="#111" right={17} /></TitleBar>
    <GhMenu>
      {["File", "Edit", "View", "Display", "Solution", "Help"].map((m) => <span key={m}>{m}</span>)}
      <Push>unnamed*</Push>
    </GhMenu>
    <TabRow>
      <GhTab $w={50} $active>Params</GhTab>
      {ghTabs.map(([t, width]) => <GhTab key={t} $w={width}>{t}</GhTab>)}
    </TabRow>
    <Ribbon>
      {ribbonGroups.map((g) => (
        <Group key={g.name}>
          <GroupCells>
            {g.columns.map((c, i) => (
              <CellColumn key={i} $split={c.split}>
                <Cell>{c.icons[0]}</Cell><Cell>{c.icons[1]}</Cell>
              </CellColumn>
            ))}
          </GroupCells>
          <GroupName>{g.name}<GroupMore width="7" height="8"><path d="M3.500 0V7M0.500 3.500H6.500M1.500 4.500L3.500 7L5.500 4.500" stroke="#bbb" fill="none" /></GroupMore></GroupName>
        </Group>
      ))}
    </Ribbon>
    <GhToolbar />
    <CanvasArea>
      <CanvasEdge />
      <Layer>
        <Wires />
        {sliders.map((s) => <SliderNode key={s.name} s={s} />)}
        {nodes.map((n) => <GraphNode key={n.id} n={n} />)}
        <NodeBox $x={594} $y={684} $w={92} $h={21}>
          <SliderName $w={51}>Swatch</SliderName>
          <SliderBody $color="linear-gradient(#c4effa 0, #8cdcee 5px, #86d8ea)" />
        </NodeBox>
        <CornerMark width="8" height="12"><path d="M0 1.500H6V12" fill="none" stroke="#222" /></CornerMark>
        <Compass width="60" height="40">
          <path d="M4 6L14 8L11 18Z" fill="#000" />
          <path d="M10 18C12 12 18 8 22 8" stroke="#000" strokeWidth="3" fill="none" />
          <circle cx="27.500" cy="27.500" r="19.500" fill="#fff" stroke="#333" strokeWidth="1.300" />
          <circle cx="27.500" cy="27.500" r="17" fill="url(#gCompass)" stroke="#777" />
          <path d="M10 19L17 14L18 20ZM45 19L38 14L37 20ZM12 40L17 35L19 40ZM43 40L38 35L36 40Z" fill="#fff" />
          <defs><radialGradient id="gCompass"><stop offset="0" stopColor="#eee" /><stop offset="1" stopColor="#bbb" /></radialGradient></defs>
        </Compass>
      </Layer>
    </CanvasArea>
  </GhWindow>
);

/* ---------- Rhino window ---------- */

const RhWindow = styled.section`
  width: 948px;
  height: 989px;
  display: flex;
  flex-direction: column;
  overflow: hidden;
  position: relative;
  background: #ebecf0;
`;

const EdgeShade = styled.div`
  position: absolute;
  left: 0;
  top: 48px;
  bottom: 0;
  width: 42px;
  background: linear-gradient(90deg, rgba(90, 94, 105, 0.32), rgba(120, 124, 135, 0.12) 35%, transparent);
  pointer-events: none;
`;

const RhMenu = styled.nav`
  height: 18px;
  flex: none;
  display: flex;
  align-items: center;
  padding: 0 0 0 7px;
  background: #fff;
  font-size: 12px;
  line-height: 17px;
  color: #7a7a7a;
`;

const MenuItem = styled.span<{ $w: number }>`
  width: ${(p) => p.$w}px;
  flex: none;
  white-space: nowrap;
`;

const menu: [string, number][] = [
  ["檔案(F)", 52], ["編輯(E)", 53.5], ["檢視(V)", 53.5], ["曲線(C)", 54], ["曲面(S)", 53], ["SubD(U)", 62],
  ["實體(O)", 56], ["網格(M)", 58], ["尺寸標註(D)", 79], ["變動(T)", 53], ["工具(L)", 52], ["分析(A)", 54],
  ["彩現(R)", 54], ["面板(P)", 53], ["說明(H)", 50],
];

const Command = styled.div`
  margin: 5px 7px 0 7px;
  height: 50px;
  flex: none;
  background: #fff;
  font-size: 12px;
  color: #111;
  overflow: hidden;
`;

const CommandHistory = styled.div`
  height: 31px;
  border-bottom: 1px solid #c3c6d6;
  display: flex;
  flex-direction: column;
  justify-content: flex-end;
  overflow: hidden;
  padding: 0 0 1px 1px;
  line-height: 19px;
  span { height: 19px; flex: none; }
`;

const CommandPrompt = styled.div`
  padding-left: 1px;
  line-height: 15px;
  -webkit-text-stroke: 0.3px #111;
`;

const RhTabs = styled.div`
  height: 34px;
  flex: none;
  margin-top: 3px;
  border-top: 1px solid #cdd0dd;
  position: relative;
`;

const TabOutline = styled.svg`
  position: absolute;
  left: 0;
  top: 4px;
`;

const TabLabels = styled.div`
  display: flex;
  padding: 7px 0 0 23.5px;
  width: 925px;
  overflow: hidden;
  font-size: 12.7px;
  line-height: 19px;
  color: #2b2d33;
`;

const rhTabs: [string, number][] = [
  ["標準", 60], ["工作平面", 86.5], ["設定視圖", 85], ["顯示", 59.5], ["選取", 61.5], ["作業視窗配置", 114],
  ["可見性", 72], ["變動", 60], ["曲線工具", 87], ["曲面工具", 87], ["實體工具", 86], ["SubD 工具", 70],
];

const TabOverflow = styled.div`
  position: absolute;
  right: 0;
  top: 4px;
  width: 22px;
  height: 26px;
  border-left: 1px solid #b9bfd2;
  border-top: 1px solid #b9bfd2;
  background: #ebecf0;
  display: flex;
  align-items: center;
  padding: 0 0 2px 4px;
  gap: 4px;
`;

const DisplayBar = styled.div`
  height: 35px;
  flex: none;
  display: flex;
  align-items: flex-start;
  padding-left: 7px;
`;

const ToolCell = styled.span<{ $bg?: string }>`
  width: 24px;
  height: 24px;
  margin: 0 2px;
  display: grid;
  place-items: center;
  background: ${(p) => p.$bg || "none"};
`;

const ToolSplit = styled.span`
  width: 1px;
  height: 22px;
  margin: 1px 3px 0 2px;
  background: #a8acb8;
`;

const globe = (fill: string, line = "#222") => (
  <svg width="20" height="20" viewBox="0 0 20 20"><circle cx="10" cy="10" r="8.800" fill={fill} stroke={line} /><path d="M1.200 11C6 13 14 13 18.800 11M11 1.200C14 6 14 14 11 18.800" fill="none" stroke={line} strokeWidth="0.900" /></svg>
);

const cube = (x: number, y: number, s: number, f: [string, string, string] = ["#b9c6f5", "#8296e6", "#4055b0"]) => (
  <g stroke="#16205a" strokeWidth="0.700" strokeLinejoin="round">
    <path d={`M${x} ${y + s * 0.25}L${x + s * 0.45} ${y}L${x + s} ${y + s * 0.15}L${x + s * 0.6} ${y + s * 0.42}Z`} fill={f[0]} />
    <path d={`M${x} ${y + s * 0.25}L${x + s * 0.6} ${y + s * 0.42}V${y + s}L${x} ${y + s * 0.8}Z`} fill={f[1]} />
    <path d={`M${x + s} ${y + s * 0.15}L${x + s * 0.6} ${y + s * 0.42}V${y + s}L${x + s} ${y + s * 0.7}Z`} fill={f[2]} />
  </g>
);

const checker = "repeating-conic-gradient(#777 0 25%, #e8e8e8 0 50%) 0 0 / 4px 4px";
const mesh = "repeating-conic-gradient(#bfc1c6 0 25%, #e8e8ea 0 50%) 0 0 / 4px 4px";

const blockIcon = <svg width="20" height="24" viewBox="0 0 20 24"><g fill="none" stroke="#111" strokeWidth="1.300"><path d="M4.500 4L10 1.500L15.500 6V11L10 13L4.500 10ZM4.500 4L10 7.500L15.500 6M10 7.500V13" /><rect x="4.500" y="13" width="11" height="9.500" rx="3.500" /></g></svg>;

const displayTools: { bg?: string; icon: React.ReactNode; split?: boolean }[] = [
  { icon: <svg width="20" height="20" viewBox="0 0 20 20"><g fill="none" stroke="#111" strokeWidth="1.300"><circle cx="10" cy="10" r="8.500" /><ellipse cx="10" cy="10" rx="4" ry="8.500" /><path d="M2.500 6.500H17.500M2.500 13.500H17.500" /></g></svg> },
  { bg: mesh, icon: globe("url(#gGray)") },
  { icon: globe("url(#gGray)") },
  { bg: checker, icon: globe("url(#gBlue)", "#0a2a9a") },
  { icon: <svg width="24" height="24" viewBox="0 0 24 24"><circle cx="12" cy="11" r="10.200" fill="url(#gOrange)" stroke="#333" /><path d="M5 22.500H19" stroke="#f5c9a0" /></svg> },
  { icon: <svg width="20" height="20" viewBox="0 0 20 20"><g fill="none" stroke="#777"><circle cx="10" cy="10" r="8.500" fill="#e9eaee" /><ellipse cx="10" cy="10" rx="4" ry="8.500" /><path d="M2.500 6.500H17.500M2.500 13.500H17.500" /></g></svg> },
  { icon: <svg width="22" height="22" viewBox="0 0 22 22"><circle cx="11" cy="12" r="9" fill="url(#gLight)" stroke="#444" /><path d="M3 17L19 3V17C16 22 8 22 3 17Z" fill="#444" opacity="0.650" /><circle cx="8" cy="10" r="2.500" fill="#eee" stroke="#333" /><circle cx="14.500" cy="11" r="2" fill="#ddd" stroke="#333" /></svg> },
  { bg: "linear-gradient(#a9bdf5, #f4f6ff)", icon: <svg width="24" height="16" viewBox="0 0 24 16"><path d="M1 4L4 2L8 3.500C11 1.500 17 1 20 3.500C22.500 5 22.500 9 22 13H19L18.500 10L16 9.500L17 13H14L13.500 9.500L10 9.500L10.500 13H7.500L7 9L5 7.500L2 6.500Z" fill="#fff" stroke="#1b2a66" strokeWidth="1.100" strokeLinejoin="round" /></svg> },
  { bg: "#c4c6ca", icon: <svg width="20" height="22" viewBox="0 0 20 22"><path d="M4 2H13V13L4 16Z" fill="#999" stroke="#111" strokeWidth="1.300" /><circle cx="12" cy="15" r="5.500" fill="#c8c8c8" stroke="#111" strokeWidth="1.300" /><rect x="9.500" y="12.500" width="5" height="5" fill="none" stroke="#111" /></svg> },
  { icon: blockIcon },
  { bg: "repeating-linear-gradient(#d8cfbb 0 2px, #ebecf0 2px 5px)", icon: blockIcon, split: true },
  { icon: <svg width="24" height="24" viewBox="0 0 24 24">{cube(1, 1, 12)}{cube(11, 10, 12)}<path d="M15 3C20 2 22 4 21 8M18.500 6.500L21 9L23 6M8 21C4 22 2 20 3 16M0.500 18L3 15L5.500 18" fill="none" stroke="#111" strokeWidth="1.200" /></svg> },
  { icon: <svg width="23" height="23" viewBox="0 0 23 23"><circle cx="10" cy="13" r="8.500" fill="url(#gGray)" stroke="#222" /><path d="M2 13H18M3 9H17M3.500 17H16.500M10 4.500V21.500M6 5.500V20.500M14 5.500V20.500" stroke="#222" strokeWidth="0.900" /><path d="M11 4L16 1H22V6L15 7Z" fill="#ddd" stroke="#111" /></svg> },
  { icon: <svg width="20" height="20" viewBox="0 0 20 20"><circle cx="10" cy="10" r="9" fill="url(#gLight)" stroke="#777" /><path d="M10 1A9 9 0 0 1 19 10H10ZM10 10V19A9 9 0 0 1 1 10Z" fill="#666" opacity="0.500" /></svg> },
  { icon: <svg width="21" height="21" viewBox="0 0 21 21"><circle cx="10.500" cy="10.500" r="9" fill="url(#gYellow)" stroke="#f2ea1a" strokeWidth="1.800" /><path d="M2 11.500C7 13.500 14 13.500 19 11.500M11.500 2C14 7 14 14 11.500 19" fill="none" stroke="#8a8520" strokeWidth="0.800" /></svg> },
  { icon: <svg width="22" height="22" viewBox="0 0 22 22"><circle cx="11" cy="11" r="8.500" fill="#e8e8ec" stroke="#555" /><path d="M11 2.500A8.500 8.500 0 0 0 2.500 11H11Z" fill="#7f9ae6" /><path d="M11 11V19.500A8.500 8.500 0 0 0 19.500 11Z" fill="#e8481c" /><path d="M11 0V22M0 11H22" stroke="#222" strokeWidth="0.900" /></svg> },
  { icon: <svg width="23" height="18" viewBox="0 0 23 18"><path d="M5 5L14 1.500L21 4V13L15 16L5 15Z" fill="url(#lGray)" stroke="#222" /><ellipse cx="6" cy="10" rx="5" ry="6" fill="url(#gBlue)" stroke="#111" /><ellipse cx="12.500" cy="11" rx="4" ry="5.500" fill="url(#gSoft)" stroke="#111" /></svg> },
  { icon: <svg width="24" height="24" viewBox="0 0 24 24"><path d="M6 2H20V22H6Z" fill="none" stroke="#fff" /><rect x="2" y="6.500" width="12" height="11" rx="3" fill="url(#gBlue)" stroke="#223" /><path d="M14 9L20 3M14 15L20 21M5 20L14 12" stroke="#222" fill="none" /><rect x="17.500" y="1" width="2.600" height="2.600" fill="#fff" stroke="#000" /><rect x="4" y="20.500" width="2.600" height="2.600" fill="#fff" stroke="#000" /></svg> },
  { icon: <svg width="24" height="24" viewBox="0 0 24 24"><rect x="2" y="6.500" width="19" height="11" rx="4" fill="url(#gSoft)" stroke="#889" /><path d="M5 5L18 19M18 5L5 19" stroke="#d81420" strokeWidth="3" /><rect x="17.500" y="1" width="2.600" height="2.600" fill="#fff" stroke="#000" /><rect x="4" y="20.500" width="2.600" height="2.600" fill="#fff" stroke="#000" /></svg> },
  { icon: <svg width="24" height="24" viewBox="0 0 24 24"><rect x="2" y="2" width="20" height="17" fill="url(#lGray)" stroke="#111" strokeWidth="2" /><path d="M10 19H14V21H17V23H7V21H10Z" fill="#111" /></svg> },
  { icon: <svg width="24" height="24" viewBox="0 0 24 24"><circle cx="8" cy="8" r="7" fill="none" stroke="#444" />{cube(8, 7, 15, ["#f2f2f2", "#fff", "#ddd"])}</svg> },
  { icon: <svg width="24" height="24" viewBox="0 0 24 24">{cube(12, 1, 12, ["#eee", "#bbb", "#333"])}{cube(1, 10, 13, ["#23c46a", "#e23a1c", "#1fd0c8"])}<path d="M11 12L14 10" stroke="#111" strokeWidth="2" /></svg> },
  { icon: <svg width="24" height="24" viewBox="0 0 24 24"><rect x="1.500" y="1.500" width="21" height="21" rx="3" fill="#5a7cf0" stroke="#111" strokeWidth="1.400" /><path d="M2 4A2 2 0 0 1 4 2H12V11H2Z" fill="#e01414" /><path d="M13 2H20A2 2 0 0 1 22 4V11H13Z" fill="#f5a61a" /><path d="M7 2V22M12.500 2V22M17.500 2V22M2 7H22M2 12H22M2 17H22" stroke="#222" strokeWidth="0.900" /><circle cx="14" cy="9.500" r="1.700" fill="#fff" /></svg> },
];

const Body = styled.div`
  flex: 1;
  display: flex;
  min-height: 0;
`;

const Palette = styled.div`
  width: 65px;
  flex: none;
  padding: 7px 0 0 1px;
  display: grid;
  grid-template-columns: 28px 28px;
  grid-auto-rows: 28.1px;
  align-content: start;
  position: relative;
  &::before {
    content: "";
    position: absolute;
    left: 4px;
    top: 3px;
    width: 54px;
    height: 3px;
    border: solid #c3c6d2;
    border-width: 1px 0;
  }
`;

const PaletteCell = styled.span`
  width: 28px;
  height: 28px;
  display: grid;
  place-items: center;
  position: relative;
`;

const Corner = styled.svg`
  position: absolute;
  right: 1px;
  bottom: -2px;
`;

const sq = (x: number, y: number) => <rect x={x - 1.6} y={y - 1.6} width="3.200" height="3.200" fill="#fff" stroke="#000" strokeWidth="1" />;
const box = (x: number, y: number, f = "#8aa0ee", s = 6) => <rect x={x} y={y} width={s} height={s} fill={f} stroke="#111" strokeWidth="1" />;

const paletteIcons: [React.ReactNode, boolean][] = [
  [<path d="M8 4V16L10.500 13.500L12.500 18L14.500 17L12.500 13H16Z" fill="#fff" stroke="#111" />, false],
  [<circle cx="11" cy="11" r="2.200" fill="#fff" stroke="#111" />, true],
  [<g><path d="M3 19L8 6L18 16" {...k} strokeWidth={1} />{sq(3, 19)}{sq(8, 6)}{sq(18, 16)}</g>, true],
  [<g><path d="M4 5C14 4 20 5 20 10C20 15 14 17 4 17" {...k} strokeWidth={1} />{sq(4, 5)}{sq(4, 17)}{sq(18, 3)}{sq(20, 19)}</g>, true],
  [<g><circle cx="11" cy="11" r="9.500" {...k} strokeWidth={1} /><path d="M11 11L17 5" {...k} />{sq(11, 11)}{sq(17, 5)}</g>, true],
  [<g><ellipse cx="11.500" cy="11" rx="10" ry="6.500" {...k} strokeWidth={1} /><path d="M11.500 5V11H20" {...k} strokeWidth={0.9} />{sq(11.5, 5)}{sq(11.5, 11)}{sq(20, 11)}</g>, true],
  [<g><path d="M4 3V20L19 11" {...k} strokeWidth={0.8} /><path d="M4 3C12 3 17 6 19 11" {...k} strokeWidth={1.4} />{sq(4, 3)}{sq(4, 20)}{sq(19, 11)}</g>, true],
  [<g><rect x="3" y="6" width="17" height="10" {...k} />{sq(3, 16)}{sq(20, 6)}</g>, true],
  [<g><path d="M7 3H15L19.500 10.500L15 18H7L2.500 10.500Z" {...k} strokeWidth={1} /><path d="M11 10.500H18" {...k} />{sq(11, 10.500)}{sq(18.5, 10.500)}</g>, true],
  [<g><path d="M3 4H19V19" stroke="#999" fill="none" /><path d="M3 4H10C16 4 19 8 19 19" {...k} strokeWidth={1.800} />{sq(3, 4)}{sq(19, 19)}</g>, true],
  [<g><path d="M6 4L19 3L14 19L2 15Z" fill="url(#lPale)" stroke="#111" /><path d="M12 4L8 17M4 9.500L17 10" stroke="#223" strokeWidth="0.800" />{sq(6, 4)}{sq(19, 3)}{sq(14, 19)}{sq(2, 15)}</g>, true],
  [<g><path d="M3 2L11 4C17 7 20 12 19 21L12 17C13 12 8 9 3 8Z" fill="#fff" stroke="#111" /><path d="M9 3.500C16 6 18 10 19 14L13 14C12 11 10 9 6.500 8.500Z" fill="url(#lPale)" stroke="#111" /></g>, true],
  [<g>{cube(3, 3, 17)}</g>, true],
  [<g><circle cx="7.500" cy="14" r="6.500" fill="url(#gSoft)" stroke="#16205a" /><circle cx="15" cy="7" r="6.500" fill="url(#gSoft)" stroke="#16205a" /><path d="M2 13L12 15M10 6L21 8" stroke="#16205a" strokeWidth="0.800" /></g>, true],
  [<g><ellipse cx="11" cy="2" rx="5" ry="2" fill="#fff" stroke="#333" /><path d="M1 8C7 11 15 11 21 8V18C15 21 7 21 1 18Z" fill="url(#lPale)" stroke="#16205a" /><ellipse cx="11" cy="15" rx="5" ry="2.500" fill="#fff" stroke="#89c" /></g>, true],
  [<g><path d="M7 4L21 2L16 16L2 19Z" fill="url(#lPale)" stroke="#16205a" /><path d="M12 3L8 18M16.500 3L12 17M5 11L19 8" stroke="#16205a" strokeWidth="0.700" /></g>, true],
  [<g><path d="M2 4L6 5L8 1L11 4L14 3L13 7L15 9L12 11L11 15L8 12L4 13L5 9Z" fill="url(#lOrange)" stroke="#8a5200" /><path d="M10 11L14 12L16 9L18 12L21 12L20 15L22 18L18 18L17 21L14 19L11 20L12 16Z" fill="#fff" stroke="#222" /></g>, false],
  [<path d="M0.500 21V6L6 12L10 1L12 11L20 5L13.500 14.500L20 21Z" fill="url(#lOrange)" stroke="#7a4400" strokeWidth="0.800" />, false],
  [<g><rect x="1" y="9" width="10" height="5" {...k} fill="#fff" /><path d="M13 13L20 17L17 21L11 16Z" {...k} strokeWidth={1} fill="#fff" /><path d="M11 1H17L11 14Z" fill="#203a9a" /></g>, false],
  [<g><rect x="2" y="10" width="18" height="5" {...k} fill="#fff" /><path d="M12 2H18L13 15Z" fill="#203a9a" /></g>, false],
  [<g stroke="#111" strokeWidth="2"><circle cx="11" cy="7.500" r="4.500" fill="#8c88f0" /><circle cx="7.500" cy="13" r="4.500" fill="#fff" /><circle cx="14.500" cy="13" r="4.500" fill="#181c78" /></g>, true],
  [<g stroke="#111" strokeWidth="0.900"><circle cx="11" cy="5" r="3.600" fill="#8c88f0" /><circle cx="6" cy="13.500" r="3.600" fill="#fff" /><circle cx="16" cy="13.500" r="3.600" fill="#181c78" /></g>, false],
  [<g><path d="M1 5H6C13 5 16 10 17 18" {...k} strokeWidth={1.800} />{sq(6, 5)}{sq(16, 14)}</g>, false],
  [<g><path d="M2 6C11 6 15 10 16 19" {...k} strokeWidth={1.800} /><path d="M1 1.500H9L19 12V19" {...k} strokeDasharray="1.500 1.500" />{sq(9, 1.5)}{sq(20, 12)}</g>, true],
  [<path d="M3 2H19V7H17C16 5 15 4.500 13 4.500V17L15 19V20H7V19L9 17V4.500C7 4.500 6 5 5 7H3Z" fill="url(#lPale)" stroke="#1a2a7a" />, false],
  [<g>{box(2, 14, "#e4e4e4", 6)}{box(14, 1, "#9ba9f2", 6)}<path d="M9 13L14 8M11 7.500H14.500V11" {...k} strokeWidth={1} /></g>, true],
  [<g>{box(2, 2)}{box(2, 14, "#e4e4e4")}{box(14, 6)}{box(10, 10)}{box(14, 17, "#8aa0ee", 5)}</g>, false],
  [<g><rect x="2" y="1" width="5" height="14" fill="#fff" stroke="#111" /><path d="M9 16L18 7L21.500 11L12 19.500Z" fill="#8aa0ee" stroke="#111" /><path d="M9 4C12 3 14 4 15 6" {...k} strokeWidth={1} /></g>, false],
  [<g>{cube(1, 1, 19)}<path d="M8 12L14 11V17L8 19Z" fill="#fff" stroke="#111" strokeWidth="0.700" /></g>, true],
  [<g><path d="M5 13H21L17 19H1Z" fill="url(#lPale)" stroke="#16205a" /><path d="M6 15V4M12 15V4M18 15V4M4 6L6 3L8 6M10 6L12 3L14 6M16 6L18 3L20 6" stroke="#fff" strokeWidth="1.300" fill="none" /></g>, true],
  [<g>{[1, 8.5, 16].map((x) => [1, 8.5, 16].map((y) => <g key={x + "-" + y}>{box(x, y, y > 12 && x < 5 ? "#eee" : "#8aa0ee", 4.5)}</g>))}</g>, true],
  [<g><rect x="7" y="1" width="9" height="5" {...k} fill="#fff" /><rect x="8.500" y="8.500" width="6" height="4.500" {...k} fill="#fff" /><rect x="7.500" y="15" width="8" height="5.500" {...k} fill="#fff" /><path d="M11.500 0V22" stroke="#e02020" strokeWidth="1.300" /></g>, true],
  [<g><path d="M2 5L8 3V17L2 20Z" fill="#e8e8e8" stroke="#111" /><path d="M8 15L13 2L20 4L15 20L8 18Z" fill="url(#lPale)" stroke="#16205a" /><path d="M6 6C8 2 11 2 13 4" {...k} strokeWidth={0.900} /></g>, true],
  [<path d="M2 13L4 11L8 15C11 9 15 5 20 2C15 8 11 14 8.500 20Z" fill="#111" />, true],
  [<g><path d="M2 7L7 3L13 6V14L8 18L2 15Z" fill="#bbb" stroke="#222" /><path d="M2 7L8 9L13 6M8 9V18" fill="none" stroke="#222" strokeWidth="0.800" /><path d="M15 5L20 16C18 19 12 19 10 16Z" fill="#888" stroke="#222" /></g>, true],
  [<g><path d="M10 8L19 17L11 21L2 16Z" fill="url(#lOrange)" stroke="#6a4200" /><path d="M10 8L11 21" stroke="#a06000" /><path d="M8 4L13 1L22 0V4L12 5Z" fill="#ccc" stroke="#111" strokeWidth="0.900" /></g>, true],
];

const ViewColumn = styled.div`
  width: 843px;
  flex: none;
  display: flex;
  flex-direction: column;
`;

const Viewport = styled.div`
  height: 785px;
  position: relative;
  overflow: hidden;
  background: #9ca3ab;
  border-top: 1px solid #b9c0cc;
  border-left: 1px solid #a9b3c4;
`;

const ViewLabel = styled.div`
  position: absolute;
  left: 0;
  top: 0;
  width: 99px;
  height: 19px;
  display: flex;
  align-items: center;
  background: #7c98ec;
  color: #1f2c55;
  font-size: 13px;
  line-height: 17px;
  padding: 0 3px 1px 8px;
  justify-content: space-between;
`;

const LabelArrow = styled.span`
  border-left: 1px solid #1f2c55;
  height: 16px;
  display: flex;
  align-items: center;
  padding-left: 2px;
`;

const Scene = styled.svg`
  position: absolute;
  left: -1027px;
  top: -178px;
`;

/* Construction plane: projective map from the unit square to the four plane corners */
type P = [number, number];
const F: P = [1457, 505], R: P = [1950, 618], N: P = [1257, 813], L: P = [764, 579];

const project = (() => {
  const dx1 = R[0] - N[0], dx2 = L[0] - N[0], sx = F[0] - R[0] + N[0] - L[0];
  const dy1 = R[1] - N[1], dy2 = L[1] - N[1], sy = F[1] - R[1] + N[1] - L[1];
  const det = dx1 * dy2 - dx2 * dy1;
  const g = (sx * dy2 - dx2 * sy) / det;
  const h = (dx1 * sy - sx * dy1) / det;
  const a = R[0] - F[0] + g * R[0], b = L[0] - F[0] + h * L[0];
  const d = R[1] - F[1] + g * R[1], e = L[1] - F[1] + h * L[1];
  return (u: number, v: number): P => {
    const q = g * u + h * v + 1;
    return [(a * u + b * v + F[0]) / q, (d * u + e * v + F[1]) / q];
  };
})();

const seg = (p: P, q: P) => `M${p[0].toFixed(1)} ${p[1].toFixed(1)}L${q[0].toFixed(1)} ${q[1].toFixed(1)}`;
const gridPath = (major: boolean) =>
  Array.from({ length: 71 }, (_, i) => i)
    .filter((i) => (i % 5 === 0) === major)
    .map((i) => seg(project(i / 70, 0), project(i / 70, 1)) + seg(project(0, i / 70), project(1, i / 70)))
    .join("");

const smooth = (pts: number[]) => {
  const p: P[] = [];
  for (let i = 0; i < pts.length; i += 2) p.push([pts[i], pts[i + 1]]);
  const n = p.length;
  let d = `M${p[0][0]} ${p[0][1]}`;
  for (let i = 0; i < n; i++) {
    const a = p[(i + n - 1) % n], b = p[i], c = p[(i + 1) % n], e = p[(i + 2) % n];
    d += `C${b[0] + (c[0] - a[0]) / 6} ${b[1] + (c[1] - a[1]) / 6} ${c[0] - (e[0] - b[0]) / 6} ${c[1] - (e[1] - b[1]) / 6} ${c[0]} ${c[1]}`;
  }
  return d + "Z";
};

const outline = smooth([100, 96, 150, 90, 300, 78, 430, 68, 480, 72, 600, 92, 660, 95, 740, 100, 860, 120, 885, 135, 892, 175, 888, 250, 890, 330, 888, 420, 886, 495, 888, 540, 885, 620, 885, 800, 885, 900, 887, 1010, 885, 1055, 878, 1085, 884, 1115, 883, 1300, 882, 1480, 876, 1522, 850, 1545, 780, 1567, 745, 1562, 700, 1578, 600, 1622, 540, 1632, 500, 1620, 420, 1572, 395, 1552, 350, 1540, 250, 1488, 160, 1448, 138, 1420, 130, 1350, 132, 1250, 126, 1200, 120, 1100, 124, 900, 114, 800, 108, 650, 106, 500, 112, 450, 116, 430, 98, 370, 97, 300, 106, 270, 95, 200, 91, 130]);

const holes = [
  [160, 98, 300, 88, 405, 89, 380, 108, 350, 122, 290, 122, 200, 108],
  [462, 90, 520, 88, 615, 102, 580, 113, 520, 112, 466, 112],
  [148, 112, 250, 120, 330, 138, 337, 190, 326, 290, 300, 368, 258, 402, 215, 380, 160, 310, 148, 265, 126, 205, 123, 140],
  [125, 318, 150, 328, 185, 378, 210, 420, 180, 428, 145, 402, 125, 365],
  [405, 162, 470, 157, 518, 195, 530, 270, 526, 355, 497, 404, 430, 417, 370, 402, 341, 360, 345, 280, 360, 205],
  [578, 185, 605, 160, 634, 158, 622, 225, 606, 252, 580, 240, 565, 215],
  [660, 157, 705, 158, 742, 200, 762, 290, 775, 400, 765, 464, 720, 454, 684, 412, 660, 330, 652, 240],
  [782, 170, 830, 153, 872, 185, 881, 270, 881, 380, 865, 454, 830, 477, 800, 455, 785, 380, 775, 290, 765, 215],
  [585, 432, 600, 395, 622, 380, 638, 400, 630, 437, 603, 447],
  [566, 248, 585, 290, 598, 302, 592, 350, 562, 395, 556, 330],
  [248, 455, 300, 446, 345, 450, 395, 510, 352, 562, 300, 517],
  [370, 452, 440, 450, 438, 495, 425, 515, 395, 490],
  [447, 450, 530, 460, 532, 532, 495, 524, 462, 512, 450, 490],
  [465, 562, 490, 543, 527, 545, 522, 568, 492, 580],
  [245, 527, 270, 520, 318, 545, 342, 574, 318, 580, 270, 560],
  [672, 545, 700, 523, 732, 532, 728, 554, 700, 571],
  [586, 604, 606, 587, 628, 600, 620, 618, 597, 614],
  [592, 522, 603, 513, 608, 530, 596, 535],
  [562, 490, 570, 478, 578, 500, 566, 580, 556, 600, 556, 540],
  [590, 556, 612, 545, 622, 570, 604, 578],
  [119, 540, 131, 495, 155, 484, 190, 497, 217, 540, 236, 640, 246, 760, 237, 820, 190, 867, 145, 850, 123, 770],
  [250, 566, 278, 598, 300, 650, 305, 750, 294, 824, 272, 794, 255, 692],
  [318, 665, 340, 616, 378, 613, 412, 660, 432, 720, 426, 782, 405, 822, 370, 834, 335, 803, 316, 740],
  [450, 660, 480, 628, 511, 650, 525, 720, 530, 830, 514, 874, 480, 863, 456, 812, 447, 740],
  [565, 705, 610, 668, 655, 690, 668, 760, 662, 845, 620, 882, 575, 872, 551, 800, 554, 740],
  [696, 660, 738, 590, 800, 538, 850, 519, 875, 550, 879, 700, 879, 900, 874, 1032, 850, 1052, 798, 1036, 742, 965, 698, 880, 684, 800, 686, 720],
  [133, 1000, 142, 938, 170, 926, 203, 940, 210, 980, 194, 1060, 172, 1140, 153, 1190, 140, 1175, 131, 1080],
  [225, 985, 257, 933, 300, 926, 325, 985, 327, 1080, 317, 1172, 262, 1205, 205, 1217, 179, 1190, 191, 1100],
  [342, 1145, 345, 1060, 368, 985, 410, 966, 442, 968, 442, 1030, 405, 1100, 362, 1142],
  [458, 968, 488, 983, 494, 1050, 480, 1085, 466, 1045],
  [345, 1195, 370, 1153, 418, 1136, 443, 1160, 420, 1197, 392, 1214, 350, 1216],
  [336, 905, 400, 893, 442, 904, 432, 931, 372, 943, 343, 930],
  [470, 911, 507, 922, 490, 933, 460, 928],
  [583, 945, 618, 931, 652, 950, 655, 974, 622, 987],
  [550, 972, 592, 1010, 584, 1052, 549, 1128],
  [510, 1028, 531, 973, 535, 1122, 508, 1152, 485, 1130],
  [550, 1120, 598, 1062, 655, 1048, 652, 1080, 632, 1130, 610, 1180, 590, 1192, 550, 1170],
  [672, 1050, 737, 1070, 774, 1100, 772, 1150, 735, 1200, 660, 1202, 626, 1192, 638, 1150, 662, 1085],
  [556, 1238, 600, 1221, 692, 1224, 674, 1247, 620, 1272, 573, 1277],
  [804, 1205, 838, 1128, 864, 1115, 876, 1160, 876, 1400, 861, 1478, 835, 1505, 790, 1490, 757, 1465, 759, 1310, 775, 1240],
  [622, 1335, 658, 1275, 712, 1260, 738, 1290, 741, 1400, 737, 1464, 690, 1440, 640, 1405],
  [556, 1395, 562, 1350, 590, 1298, 603, 1320, 598, 1372, 574, 1398],
  [762, 1482, 795, 1500, 825, 1515, 800, 1528, 772, 1518],
  [143, 1285, 160, 1250, 185, 1250, 206, 1300, 206, 1350, 196, 1390, 165, 1397, 145, 1350],
  [248, 1315, 285, 1291, 328, 1294, 350, 1372, 305, 1390, 260, 1362],
  [368, 1300, 425, 1296, 434, 1320, 407, 1350, 366, 1364],
  [368, 1380, 430, 1361, 494, 1368, 504, 1401, 430, 1409, 372, 1403],
  [188, 1440, 250, 1422, 347, 1419, 362, 1440, 367, 1500, 340, 1527, 260, 1482],
  [374, 1432, 440, 1420, 507, 1440, 502, 1490, 445, 1517, 400, 1492],
  [556, 1465, 593, 1434, 655, 1438, 730, 1478, 738, 1518, 700, 1539, 610, 1516],
  [448, 1563, 490, 1539, 527, 1539, 529, 1591, 500, 1602],
  [558, 1550, 615, 1534, 694, 1560, 640, 1592, 583, 1606],
  [280, 1230, 300, 1214, 309, 1234, 295, 1245],
  [498, 1232, 530, 1225, 532, 1250, 510, 1258],
  [388, 1262, 415, 1248, 440, 1256, 445, 1275, 410, 1272],
].map(smooth);

/* A strut is wide at its joints and thin in the middle */
const strut = (x1: number, y1: number, w1: number, x2: number, y2: number, w2: number, m: number) => {
  const l = Math.hypot(x2 - x1, y2 - y1), nx = -(y2 - y1) / l, ny = (x2 - x1) / l;
  const pt = (t: number, o: number) => `${x1 + (x2 - x1) * t + nx * o} ${y1 + (y2 - y1) * t + ny * o}`;
  return `M${pt(0, w1)}C${pt(0.1, m)} ${pt(0.25, m)} ${pt(0.5, m)}S${pt(0.9, m)} ${pt(1, w2)}L${pt(1, -w2)}C${pt(0.9, -m)} ${pt(0.75, -m)} ${pt(0.5, -m)}S${pt(0.1, -m)} ${pt(0, -w1)}Z`;
};

const struts = [
  strut(135, 240, 30, 345, 140, 14, 5), strut(440, 150, 12, 442, 420, 10, 4),
  strut(445, 640, 10, 442, 880, 14, 4), strut(642, 660, 12, 646, 880, 12, 5),
];

const ribs = "M535 160L535 440L540 1620M345 150C345 300 330 380 320 410M320 410C380 480 450 560 530 640M215 400C235 560 250 700 265 850M365 130C500 150 640 110 730 140M740 145C760 260 770 420 795 500M545 440C600 460 630 480 630 490M630 490C620 560 660 600 685 625M245 480C280 560 330 600 420 610M420 610C450 660 460 600 535 640M685 640C690 720 680 820 690 900M535 910C600 900 640 890 690 880M265 850C290 920 330 950 340 960M340 960C330 1100 335 1200 330 1260M540 905C660 910 700 1000 800 1080M800 1080C780 1180 760 1200 750 1230M750 1230C745 1350 745 1450 745 1545M330 1265C370 1400 370 1480 390 1550M540 1320C590 1280 660 1260 750 1230M140 1220C200 1240 260 1260 330 1265M610 1040C700 1040 740 1050 790 1080M225 1380C320 1400 420 1410 520 1410M540 1320C520 1400 540 1500 540 1600M200 1260L240 1400M440 1080L360 1150M450 1080L530 1170M120 440C160 430 200 450 245 480M240 460C300 420 450 430 535 430M630 490L590 470M630 490L700 470M630 490L600 540M245 480L225 440M245 480L215 520M420 610L440 570M420 610L425 690M633 320L600 300M633 320L650 400M540 905L520 870M540 905L560 960M340 960L310 930M800 1080L830 1060M750 1230L720 1215M330 1265L300 1250M445 1080L430 1050M620 1020L600 990M240 1400L215 1370M240 1400L260 1430M665 430L640 410M665 430L690 470";
const shine = "M112 130C110 200 120 250 150 300M155 95C260 88 380 78 440 78M545 170C550 250 548 340 545 400M335 200C330 300 330 360 345 400M640 170C635 260 610 330 570 400M755 190C770 300 775 400 790 470M590 470C650 500 640 560 660 600M780 500C740 600 660 640 590 640M120 360C125 400 160 420 200 430M250 870C270 930 310 950 380 955M560 900C660 910 720 990 770 1040M790 1120C780 1190 700 1230 610 1260M760 1260C790 1180 820 1120 860 1095M350 980C345 1100 345 1180 340 1240M560 1600C650 1580 700 1570 740 1550M150 1400C170 1440 220 1440 250 1430M415 1500C440 1550 490 1600 530 1610M620 1290C615 1350 620 1390 650 1420M265 840C330 860 420 850 490 890M510 980C500 1060 480 1130 400 1190M770 1550C830 1550 870 1520 875 1480M440 120C520 140 640 130 730 130M235 470C240 560 250 680 262 800M400 520C430 540 500 520 540 500M400 1240C440 1200 500 1190 540 1180M470 1230C500 1300 515 1400 520 1500M440 1290C470 1300 490 1340 500 1360M570 1220C600 1210 660 1215 700 1210";
const stars: P[] = [[776, 208], [566, 318], [203, 738], [415, 738], [484, 686], [791, 736], [222, 1028], [395, 1057], [465, 1147], [420, 1264], [728, 1339], [303, 1448], [530, 1425]];

const rims: [string, number][] = [["#94e8f5", 56], ["#7fd9e9", 46], ["#90e7f4", 38], ["#a5f2fc", 25], ["#8fe5f3", 15], ["#7ad2e4", 6]];

const ViewportScene = () => (
  <Scene width="1909" height="990">
    <g fill="none">
      <path d={gridPath(false)} stroke="#6c757f" strokeOpacity="0.350" strokeWidth="0.700" />
      <path d={gridPath(true)} stroke="#5f6871" strokeOpacity="0.700" strokeWidth="0.900" />
      <path d="M1373 602L1680 694" stroke="#b03038" strokeWidth="1.800" />
      <path d="M1373 602L1655 548" stroke="#3da33d" strokeWidth="1.800" />
    </g>
    <g transform="translate(1210 330) scale(0.33333)">
      <defs>
        <mask id="cage"><path d={outline} fill="#fff" />{holes.map((d, i) => <path key={i} d={d} fill="#000" />)}</mask>
      </defs>
      <g fill="#84deee">{struts.map((d, i) => <path key={i} d={d} stroke="#a5f2fc" strokeWidth="1.500" />)}</g>
      <g mask="url(#cage)" fill="none">
        <path d={outline} fill="#88e0ef" />
        {rims.map(([color, width]) => <g key={width} stroke={color} strokeWidth={width}>{holes.map((d, i) => <path key={i} d={d} />)}</g>)}
        <path d={outline} stroke="#7dd5e6" strokeWidth="6" />
        <path d={shine} stroke="#d6fdff" strokeWidth="5" strokeLinecap="round" strokeOpacity="0.850" />
        <path d={shine} stroke="#5fbdd2" strokeWidth="2.500" strokeOpacity="0.700" transform="translate(8 4)" />
        <path d={ribs} stroke="#55a9ba" strokeWidth="2" strokeOpacity="0.600" />
      </g>
      <g stroke="#aaa6a4" strokeWidth="9">
        {stars.map(([x, y], i) => <path key={i} d={`M${x - 11} ${y - 11}L${x + 11} ${y + 11}M${x + 11} ${y - 11}L${x - 11} ${y + 11}`} />)}
      </g>
    </g>
    <g stroke="#50565d" fill="none"><path d="M1062.500 896V925L1085 921M1062.500 925L1082 930" /></g>
    <g fill="#50565d" fontFamily="Open Sans" fontSize="13"><text x="1064" y="896">z</text><text x="1087" y="919.500">y</text><text x="1084" y="931">x</text></g>
  </Scene>
);

const ViewTabs = styled.div`
  flex: 1;
  display: flex;
  font-size: 13px;
  line-height: 24px;
  color: #2b2d33;
`;

const ViewTab = styled.span<{ $w: number }>`
  width: ${(p) => p.$w}px;
`;

const ActiveViewTab = styled.span`
  width: 84px;
  height: 22px;
  margin-right: 10px;
  padding-left: 8px;
  background: #eff0f4;
  border: 1px solid #b9c2d6;
  border-top: 0;
  border-radius: 0 0 5px 5px;
  clip-path: polygon(0 0, 100% 0, 100% 100%, 8px 100%, 0 14px);
`;

const SidePanel = styled.aside`
  flex: 1;
  padding-left: 8px;
  display: flex;
  flex-direction: column;
  overflow: hidden;
  white-space: nowrap;
`;

const SideTitle = styled.div`
  height: 21px;
  padding: 2px 0 0 4px;
  font-size: 12.7px;
  line-height: 18px;
  color: #2b2d33;
`;

const SideIcons = styled.div<{ $h?: number }>`
  height: ${(p) => p.$h || 27}px;
  display: flex;
  align-items: center;
  gap: 4px;
  padding-left: 5px;
`;

const SideBox = styled.div`
  flex: 1;
  border-left: 1px solid #b9bfd2;
  border-top: 1px solid #b9bfd2;
  padding: 3px 0 0 3px;
`;

const SideInput = styled.div`
  height: 22px;
  background: #fff;
  border: 1px solid #b9bfd2;
  border-right: 0;
`;

const SideCheck = styled.div`
  display: flex;
  align-items: center;
  gap: 3px;
  padding-left: 3px;
  margin-top: 18px;
  font-size: 12.7px;
  line-height: 20px;
`;

const RhinoLogo = styled.span`
  margin-right: 7px;
`;

const Rhino = () => (
  <RhWindow>
    <TitleBar $muted>
      <RhinoLogo><svg width="16" height="16" viewBox="0 0 16 16"><rect width="16" height="16" fill="#000" /><path d="M3 1L5.500 5L7.500 8L10 4L12 1L12 5L15 8L12 13L8 14.500L5 13L4 10L2 6Z" fill="#fff" /><path d="M6 11L11 9.500M8 13L12 11" stroke="#000" /></svg></RhinoLogo>
      <TitleText>未命名 - Rhino 7 試用版 (還剩下 85 天) - [Perspective]</TitleText>
      <WindowControls color="#777" right={7} />
    </TitleBar>
    <RhMenu>{menu.map(([m, width]) => <MenuItem key={m} $w={width}>{m}</MenuItem>)}</RhMenu>
    <Command>
      <CommandHistory><span>選取物件</span><span>選取物件: _Undo</span></CommandHistory>
      <CommandPrompt>選取物件:</CommandPrompt>
    </Command>
    <RhTabs>
      <TabOutline width="948" height="27"><path d="M7 25.500H224C228 25.500 230 23 232 20L243 5C245 2 247 1.500 250 1.500H296C299 1.500 299.500 3 299.500 5V25.500H926" fill="none" stroke="#b9c2d6" /></TabOutline>
      <TabLabels>{rhTabs.map(([t, width]) => <MenuItem key={t} $w={width}>{t}</MenuItem>)}</TabLabels>
      <TabOverflow>
        <svg width="9" height="8"><path d="M0.500 0.500L4 4L0.500 7.500M4.500 0.500L8 4L4.500 7.500" fill="none" stroke="#111" strokeWidth="1.200" /></svg>
        <svg width="14" height="14"><circle cx="7" cy="7" r="5.500" fill="#ddd" stroke="#888" strokeDasharray="2.500 1.500" strokeWidth="1.800" /><circle cx="7" cy="7" r="2" fill="#fff" stroke="#888" /></svg>
      </TabOverflow>
    </RhTabs>
    <DisplayBar>
      {displayTools.map((t, i) => (
        <React.Fragment key={i}><ToolCell $bg={t.bg}>{t.icon}</ToolCell>{t.split && <ToolSplit />}</React.Fragment>
      ))}
    </DisplayBar>
    <Body>
      <Palette>
        {paletteIcons.map(([icon, corner], i) => (
          <PaletteCell key={i}>
            <svg width="22" height="22" viewBox="0 0 22 22" overflow="visible">{icon}</svg>
            {corner && <Corner width="6" height="6"><path d="M6 0V6H0Z" fill="#5a5c62" /></Corner>}
          </PaletteCell>
        ))}
      </Palette>
      <ViewColumn>
        <Viewport>
          <ViewportScene />
          <ViewLabel>Perspective<LabelArrow><svg width="8" height="5"><path d="M0 0H8L4 4Z" fill="#1f2c55" /></svg></LabelArrow></ViewLabel>
        </Viewport>
        <ViewTabs>
          <ActiveViewTab>Perspective</ActiveViewTab>
          <ViewTab $w={39}>Top</ViewTab><ViewTab $w={50}>Front</ViewTab><ViewTab $w={49}>Right</ViewTab>
          <svg width="10" height="24"><path d="M3.500 7.500H6.500V10.500H9.500V13.500H6.500V16.500H3.500V13.500H0.500V10.500H3.500Z" fill="#fff" stroke="#555" /></svg>
        </ViewTabs>
      </ViewColumn>
      <SidePanel>
        <SideTitle>說明</SideTitle>
        <SideIcons>
          <svg width="9" height="15" viewBox="0 0 9 15"><path d="M9 2.500C4 2 2 5 2 7.500" stroke="#e01890" strokeWidth="3.400" fill="none" /><path d="M2 7.500C2 10 4 13 9 12.500" stroke="#20b8e8" strokeWidth="3.400" fill="none" /><path d="M2 6V9" stroke="#5030e0" strokeWidth="3.400" /></svg>
          <svg width="16" height="17" viewBox="0 0 16 17"><path d="M0 1L16 5V16L6 15L1 9Z" fill="#16265a" /><path d="M1 0L16 3V9L7 12Z" fill="#f04818" stroke="#822" strokeWidth="0.700" /></svg>
        </SideIcons>
        <SideIcons>
          <svg width="9" height="16" viewBox="0 0 9 16"><path d="M9 1V15C3 16 0 12 0.500 9C1 5 5 3 9 2Z" fill="url(#gBlue)" /></svg>
          <svg width="14" height="15" viewBox="0 0 14 15"><path d="M2 12L11 2L14 4L6 14Z" fill="#eee" stroke="#333" /><path d="M6 8L11 3L13 5L8 10Z" fill="#d8431c" /></svg>
        </SideIcons>
        <SideIcons $h={25}>
          <svg width="9" height="13" viewBox="0 0 9 13"><path d="M0.500 12V2.500H4L5 4H9M0.500 12L3 6H9M0.500 12H9" fill="#ffe28a" stroke="#6a5200" /></svg>
          <svg width="16" height="17" viewBox="0 0 16 17"><rect x="1" y="1" width="16" height="14" fill="#dfe6ff" stroke="#25408c" strokeWidth="1.400" /><path d="M1 2.500H16" stroke="#25408c" strokeWidth="2" /><circle cx="7" cy="9" r="4" fill="url(#gSoft)" /></svg>
        </SideIcons>
        <SideBox>
          <SideInput />
          <SideCheck><svg width="13" height="13"><rect width="13" height="13" rx="3" fill="#0a62bd" /><path d="M3.500 6.500L5.800 8.800L9.800 4.600" fill="none" stroke="#fff" strokeWidth="1.100" /></svg>自</SideCheck>
        </SideBox>
      </SidePanel>
    </Body>
    <EdgeShade />
  </RhWindow>
);

const App = () => (
  <>
    <Global />
    <Defs />
    <Desktop>
      <Grasshopper />
      <Rhino />
    </Desktop>
  </>
);

export default App;
